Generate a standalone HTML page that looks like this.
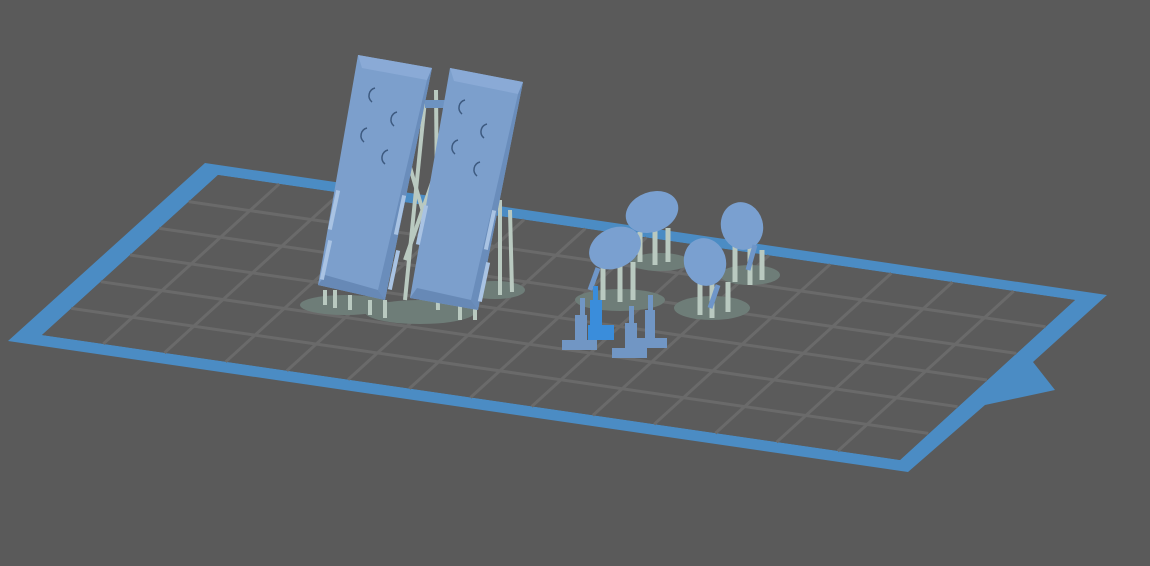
<!DOCTYPE html>
<html><head><style>html,body{margin:0;padding:0;background:#5a5a5a;width:1150px;height:566px;overflow:hidden}</style></head>
<body>
<svg width="1150" height="566" viewBox="0 0 1150 566" xmlns="http://www.w3.org/2000/svg">
<rect width="1150" height="566" fill="#5a5a5a"/>
<path fill-rule="evenodd" fill="#4b8cc4" d="M205,163 L1107,295 L1033,362 L1055,390 L985,405 L908,472 L8,341 Z M218,175 L42,335 L900,460 L1075,300 Z"/>
<polygon points="218,175 1075,300 900,460 42,335" fill="#5b5b5b"/>
<g transform="matrix(61.21 8.93 -29.33 26.67 218 175)" stroke="#6a6a6a" stroke-width="3" fill="none">
<line x1="1" y1="0" x2="1" y2="6" vector-effect="non-scaling-stroke"/>
<line x1="2" y1="0" x2="2" y2="6" vector-effect="non-scaling-stroke"/>
<line x1="3" y1="0" x2="3" y2="6" vector-effect="non-scaling-stroke"/>
<line x1="4" y1="0" x2="4" y2="6" vector-effect="non-scaling-stroke"/>
<line x1="5" y1="0" x2="5" y2="6" vector-effect="non-scaling-stroke"/>
<line x1="6" y1="0" x2="6" y2="6" vector-effect="non-scaling-stroke"/>
<line x1="7" y1="0" x2="7" y2="6" vector-effect="non-scaling-stroke"/>
<line x1="8" y1="0" x2="8" y2="6" vector-effect="non-scaling-stroke"/>
<line x1="9" y1="0" x2="9" y2="6" vector-effect="non-scaling-stroke"/>
<line x1="10" y1="0" x2="10" y2="6" vector-effect="non-scaling-stroke"/>
<line x1="11" y1="0" x2="11" y2="6" vector-effect="non-scaling-stroke"/>
<line x1="12" y1="0" x2="12" y2="6" vector-effect="non-scaling-stroke"/>
<line x1="13" y1="0" x2="13" y2="6" vector-effect="non-scaling-stroke"/>
<line x1="0" y1="1" x2="14" y2="1" vector-effect="non-scaling-stroke"/>
<line x1="0" y1="2" x2="14" y2="2" vector-effect="non-scaling-stroke"/>
<line x1="0" y1="3" x2="14" y2="3" vector-effect="non-scaling-stroke"/>
<line x1="0" y1="4" x2="14" y2="4" vector-effect="non-scaling-stroke"/>
<line x1="0" y1="5" x2="14" y2="5" vector-effect="non-scaling-stroke"/>
</g>

<g fill="#6e7d78">
<ellipse cx="345" cy="305" rx="45" ry="10"/>
<ellipse cx="420" cy="312" rx="55" ry="12"/>
<ellipse cx="495" cy="290" rx="30" ry="9"/>
<ellipse cx="620" cy="300" rx="45" ry="11"/>
<ellipse cx="660" cy="262" rx="30" ry="9"/>
<ellipse cx="712" cy="308" rx="38" ry="12"/>
<ellipse cx="750" cy="275" rx="30" ry="10"/>
</g>
<g stroke="#b9c9c0" stroke-width="4">
<line x1="425" y1="100" x2="405" y2="300"/>
<line x1="436" y1="90" x2="438" y2="310"/>
<line x1="405" y1="150" x2="440" y2="270"/>
<line x1="440" y1="160" x2="405" y2="260"/>
<line x1="500" y1="200" x2="500" y2="295"/>
<line x1="510" y1="210" x2="512" y2="292"/>
<line x1="325" y1="290" x2="325" y2="305"/>
<line x1="335" y1="290" x2="335" y2="308"/>
<line x1="350" y1="295" x2="350" y2="310"/>
<line x1="370" y1="300" x2="370" y2="315"/>
<line x1="385" y1="300" x2="385" y2="318"/>
<line x1="460" y1="305" x2="460" y2="320"/>
<line x1="475" y1="305" x2="475" y2="320"/>
</g>
<rect x="425" y="100" width="22" height="8" fill="#6d93c2"/>
<polygon points="358,55 432,68 385,300 318,285" fill="#7c9fcc"/>
<polygon points="358,55 432,68 427,80 362,68" fill="#8aaad6"/>
<polygon points="427,80 432,68 385,300 378,290" fill="#6a8dbb"/>
<polygon points="318,285 385,300 378,290 325,275" fill="#6789b6"/>
<polygon points="450,68 523,82 478,310 410,298" fill="#7c9fcc"/>
<polygon points="450,68 523,82 518,94 454,81" fill="#8aaad6"/>
<polygon points="518,94 523,82 478,310 471,300" fill="#6a8dbb"/>
<polygon points="410,298 478,310 471,300 417,288" fill="#6789b6"/>
<g fill="none" stroke="#3d5a80" stroke-width="1.5">
<path d="M375,88 a8,8 0 0 0 -3,14"/><path d="M397,112 a8,8 0 0 0 -3,14"/>
<path d="M367,128 a8,8 0 0 0 -3,14"/><path d="M388,150 a8,8 0 0 0 -3,14"/>
<path d="M465,100 a8,8 0 0 0 -3,14"/><path d="M487,124 a8,8 0 0 0 -3,14"/>
<path d="M458,140 a8,8 0 0 0 -3,14"/><path d="M480,162 a8,8 0 0 0 -3,14"/>
</g>
<g fill="#a9c3e3"><rect x="332" y="190" width="4" height="40" transform="rotate(12 334 210)"/><rect x="324" y="240" width="4" height="40" transform="rotate(12 326 260)"/><rect x="398" y="195" width="4" height="40" transform="rotate(12 400 215)"/><rect x="392" y="250" width="4" height="40" transform="rotate(12 394 270)"/><rect x="420" y="205" width="4" height="40" transform="rotate(12 422 225)"/><rect x="488" y="210" width="4" height="40" transform="rotate(12 490 230)"/><rect x="482" y="262" width="4" height="40" transform="rotate(12 484 282)"/></g>

<g stroke="#b9c9c0" stroke-width="5">
<line x1="640" y1="232" x2="640" y2="262"/><line x1="655" y1="230" x2="655" y2="265"/><line x1="668" y1="228" x2="668" y2="262"/>
<line x1="603" y1="265" x2="603" y2="300"/><line x1="620" y1="265" x2="620" y2="302"/><line x1="633" y1="262" x2="633" y2="300"/>
<line x1="700" y1="280" x2="700" y2="315"/><line x1="712" y1="282" x2="712" y2="318"/><line x1="728" y1="282" x2="728" y2="312"/>
<line x1="735" y1="245" x2="735" y2="282"/><line x1="750" y1="248" x2="750" y2="285"/><line x1="762" y1="250" x2="762" y2="280"/>
</g>
<g fill="#7aa0d0">
<ellipse cx="652" cy="212" rx="27" ry="20" transform="rotate(-20 652 212)"/>
<ellipse cx="615" cy="248" rx="27" ry="20" transform="rotate(-25 615 248)"/>
<ellipse cx="742" cy="226" rx="21" ry="24" transform="rotate(-15 742 226)"/>
<ellipse cx="705" cy="262" rx="21" ry="24" transform="rotate(-15 705 262)"/>
</g>
<g stroke="#6f96c8" stroke-width="5"><line x1="598" y1="268" x2="590" y2="290"/><line x1="755" y1="245" x2="748" y2="270"/><line x1="718" y1="285" x2="710" y2="308"/></g>
<g fill="#7196c4">
<rect x="562" y="340" width="35" height="10"/><rect x="612" y="348" width="35" height="10"/><rect x="635" y="338" width="32" height="10"/>
<rect x="575" y="315" width="12" height="28"/><rect x="580" y="298" width="5" height="20"/>
<rect x="625" y="323" width="12" height="28"/><rect x="629" y="306" width="5" height="20"/>
<rect x="645" y="310" width="10" height="28"/><rect x="648" y="295" width="5" height="18"/>
</g>
<g fill="#3a8ddb"><rect x="588" y="325" width="26" height="15"/><rect x="590" y="300" width="12" height="32"/><rect x="593" y="286" width="5" height="16"/></g>
</svg>
</body></html>
